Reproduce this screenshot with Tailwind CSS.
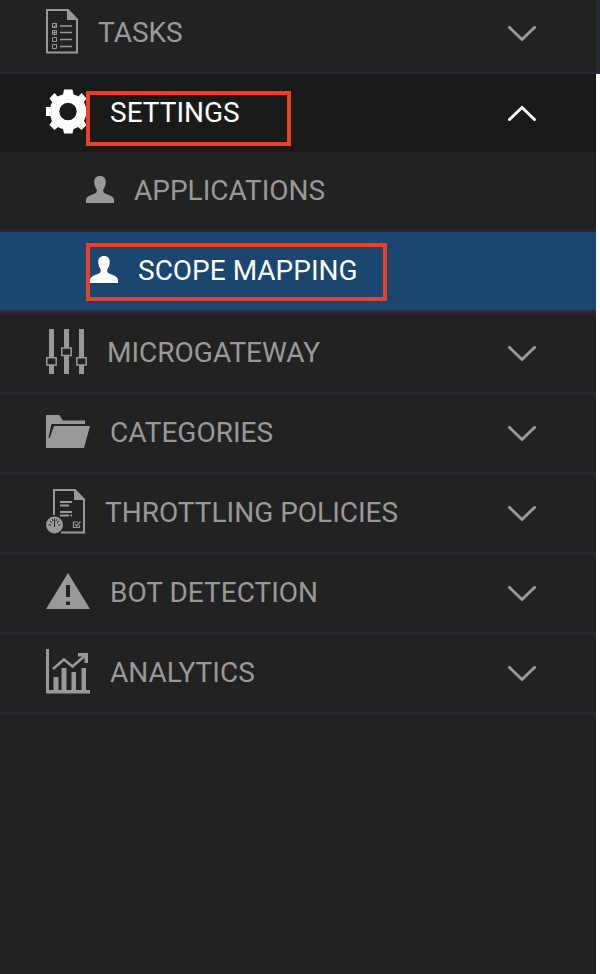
<!DOCTYPE html>
<html lang="en">
<head>
<meta charset="utf-8">
<title>Navigation</title>
<script src="https://cdn.jsdelivr.net/npm/@tailwindcss/browser@4"></script>
</head>
<body class="bg-white overflow-hidden">
<div class="relative flex h-[974px] w-[600px] overflow-hidden font-[Roboto,sans-serif] text-[28px] leading-[40px] text-[#999999]">
<svg class="hidden">
  <symbol id="down" viewBox="0 0 28 16"><path d="M1.5 1.5 14 13.5 26.5 1.5" fill="none" stroke="currentColor" stroke-width="3" stroke-linecap="round"/></symbol>
  <symbol id="user" viewBox="0 0 28 27"><path d="M14 0C18.200 0 20 2.500 19.700 7C19.500 10 18.200 12 17.300 13.500V15.500C17.800 17.300 20 17.800 23 19C26 20.200 27.700 21.500 28 24V27H0V24C.3 21.500 2 20.200 5 19C8 17.800 10.200 17.300 10.700 15.500V13.500C9.800 12 8.500 10 8.300 7C8 2.500 9.800 0 14 0Z" fill="currentColor"/></symbol>
</svg>
<nav class="flex w-[596px] flex-col bg-[#222222]">
  <div class="-mt-[6px] flex h-[80px] shrink-0 items-start border-b-2 border-[#262934] pl-[46px] pr-[60px]">
    <svg class="mt-[15px] mr-5 h-[45px] w-8" viewBox="0 0 32 45" fill="none" stroke="currentColor"><path d="M1 1H22L31 10.500V43.500H1Z" stroke-width="2"/><path d="M21 1 31 11H21Z" fill="currentColor" stroke="none"/><path d="M14 17H26M14 23.500H26M14 30.500H26M14 37.500H26" stroke-width="1.500"/><path d="M6.500 14.500H10.500V18.500H6.500ZM6.500 21.500H10.500V25.500H6.500ZM6.500 28.500H10.500V32.500H6.500ZM6.500 35.500H10.500V39.500H6.500Z"/><path d="M7 16.500 8.500 18 11 14M7 23.500H10M8.500 22V25" /></svg>
    <span class="mt-[19px]">TASKS</span>
    <svg class="mt-8 ml-auto h-4 w-7"><use href="#down"/></svg>
  </div>
  <div class="flex h-[78px] shrink-0 items-start bg-[#1a1a1a] pl-[46px] pr-[60px] text-white">
    <svg class="mt-[15px] mr-5 h-[45px] w-11" viewBox="0 0 44 45" fill="currentColor"><path fill-rule="evenodd" d="M18 .5H26.500L27.500 5.500Q30 6.200 32.300 7.500L35.500 4L40.500 9.500L38 13Q39 15.500 39.700 18H44V27H39.700Q39 29.500 38 32L40.500 36L35.500 41L32 38Q29.500 39.500 27.500 40L26.500 44.500H18L17 40Q14.500 39.500 12 38L8.500 41L3.500 36L6 32Q5 29.500 4.300 27H0V18H4.300Q5 15.500 6.200 13L3.500 9.500L8.500 4L11.700 7.500Q14.500 6.200 17 5.500ZM22 13.800A8.700 8.700 0 1 0 22 31.200A8.700 8.700 0 1 0 22 13.800Z"/></svg>
    <span class="mt-[19px]">SETTINGS</span>
    <svg class="mt-[31px] ml-auto h-4 w-7 rotate-180"><use href="#down"/></svg>
  </div>
  <div class="flex h-[80px] shrink-0 items-start border-b-2 border-[#262934] pl-[86px]">
    <svg class="mt-6 mr-5 h-[27px] w-7"><use href="#user"/></svg>
    <span class="mt-[19px]">APPLICATIONS</span>
  </div>
  <div class="flex h-[82px] shrink-0 items-start border-b-4 border-[#262a32] bg-[#1a466f] pl-[90px] text-white">
    <svg class="mt-6 mr-5 h-[27px] w-7"><use href="#user"/></svg>
    <span class="mt-[19px]">SCOPE MAPPING</span>
  </div>
  <div class="flex h-[80px] shrink-0 items-start border-b-2 border-[#262934] pl-[46px] pr-[60px]">
    <svg class="mt-[15px] mr-5 h-[45px] w-[41px]" viewBox="0 0 41 45"><path d="M3 0H8V28H3ZM3 36H8V45H3ZM18 0H23V19H18ZM18 27H23V45H18ZM33 0H38V28H33ZM33 36H38V45H33Z" fill="currentColor"/><path d="M.8 28.700H10.200V36H.8ZM15.800 19H25.200V26.500H15.800ZM30.800 28.700H40.200V36H30.800Z" fill="none" stroke="currentColor" stroke-width="1.500"/></svg>
    <span class="mt-[19px]">MICROGATEWAY</span>
    <svg class="mt-8 ml-auto h-4 w-7"><use href="#down"/></svg>
  </div>
  <div class="flex h-[80px] shrink-0 items-start border-b-2 border-[#262934] pl-[46px] pr-[60px]">
    <svg class="mt-[15px] mr-5 h-[45px] w-11" viewBox="0 0 44 45" fill="currentColor"><path d="M0 6H13L17 11.500H39V15H5.500L2.500 28.500 3.500 29.500 8 17H44L38 39H0Z"/></svg>
    <span class="mt-[19px]">CATEGORIES</span>
    <svg class="mt-8 ml-auto h-4 w-7"><use href="#down"/></svg>
  </div>
  <div class="flex h-[80px] shrink-0 items-start border-b-2 border-[#262934] pl-[46px] pr-[60px]">
    <svg class="mt-[15px] mr-5 h-[45px] w-[39px]" viewBox="0 0 39 45" fill="none" stroke="currentColor"><path d="M8 26V1H29L38 10.500V43.500H15" stroke-width="2"/><path d="M28 1 38 11H28Z" fill="currentColor" stroke="none"/><path d="M14 13H26M14 16.500H23M14 23H26M14 26.500H23M24.500 26.500H26" stroke-width="1.800"/><path d="M32 33H27.500V38.500H33.500V36M29 35 30.500 37 34.500 32.500" stroke-width="1.200"/><circle cx="8.500" cy="36" r="8.500" fill="currentColor" stroke="none"/><path d="M8.500 29.500V38M2.500 36H5M12 36H14.500M4 32 6 34M13 32 11 34M6 30 7 32M11 30 10 32" stroke="#222222" stroke-width="1"/></svg>
    <span class="mt-[19px]">THROTTLING POLICIES</span>
    <svg class="mt-8 ml-auto h-4 w-7"><use href="#down"/></svg>
  </div>
  <div class="flex h-[80px] shrink-0 items-start border-b-2 border-[#262934] pl-[46px] pr-[60px]">
    <svg class="mt-[15px] mr-5 h-[45px] w-11" viewBox="0 0 44 45" fill="currentColor"><path fill-rule="evenodd" d="M22 4 44 40H0ZM20 16V28H24V16ZM20 32.500V36H24V32.500Z"/></svg>
    <span class="mt-[19px]">BOT DETECTION</span>
    <svg class="mt-8 ml-auto h-4 w-7"><use href="#down"/></svg>
  </div>
  <div class="flex h-[80px] shrink-0 items-start border-b-2 border-[#262934] pl-[46px] pr-[60px]">
    <svg class="mt-[15px] mr-5 h-[45px] w-11" viewBox="0 0 44 45" fill="currentColor"><path d="M0 0H3V41H7.500V28H12.500V41H15.500V19H20.500V41H25.500V23H30V41H35.500V19H40V41H44V44.500H0Z"/><path d="M7 20 18 10.500 26.500 17.500 38 7.500" fill="none" stroke="currentColor" stroke-width="2.500"/><path d="M32 4H42V14H38.500V9L37 7.500H32Z"/></svg>
    <span class="mt-[19px]">ANALYTICS</span>
    <svg class="mt-8 ml-auto h-4 w-7"><use href="#down"/></svg>
  </div>
</nav>
<div class="h-[74px] w-1 bg-[#262a36]"></div>
<!-- highlight frames -->
<div class="absolute left-[86px] top-[91px] h-[55px] w-[205px] border-4 border-[#eb4026]"></div>
<div class="absolute left-[86px] top-[243px] h-[58px] w-[301px] border-4 border-[#eb4026]"></div>
</div>
</body>
</html>
